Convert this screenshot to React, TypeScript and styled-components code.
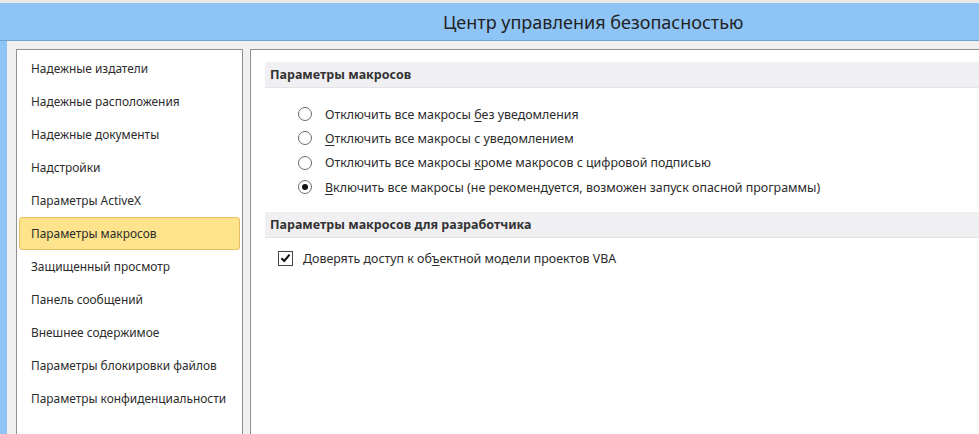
import styled, { createGlobalStyle } from "styled-components";

const GlobalStyle = createGlobalStyle`
    html, body {
        margin: 0;
        padding: 0;
        overflow: hidden;
    }
    body {
        font-family: "Noto Sans", "Open Sans", sans-serif;
        color: #2b2b2b;
    }
`;

const Window = styled.div`
    width: 979px;
    height: 434px;
    display: flex;
    flex-direction: column;
    background: #8ec5f6;
    border-top: 3px solid #e9e9e9;
    box-sizing: border-box;
    overflow: hidden;
`;

const TitleBar = styled.header`
    height: 37px;
    flex-shrink: 0;
    display: flex;
    align-items: center;
    padding-left: 443px;
    border-bottom: 1px solid #6fa3d2;
    font-size: 18px;
    color: #222;
`;

const Body = styled.div`
    flex: 1;
    margin-left: 7px;
    background: #f0f0f0;
    padding: 8px 0 0 9px;
    display: grid;
    grid-template-columns: 227px 1fr;
    column-gap: 7px;
    min-height: 0;
`;

const Panel = styled.div`
    background: #fff;
    border: 1px solid #8f8f8f;
    border-bottom: none;
    box-sizing: border-box;
`;

const Sidebar = styled(Panel)`
    padding: 2px 1px 0;
`;

const NavItem = styled.div<{ $active?: boolean }>`
    height: 33px;
    display: flex;
    align-items: center;
    padding: 0 0 1px 11px;
    box-sizing: border-box;
    font-size: 11.9px;
    border-radius: 3px;
    margin: 0 1px;
    border: 1px solid ${(p) => (p.$active ? "#e5c062" : "transparent")};
    background: ${(p) => (p.$active ? "#fde48c" : "transparent")};
`;

const Content = styled(Panel)`
    border-right: none;
    padding: 12px 0 0 14px;
`;

const SectionHeader = styled.div`
    height: 26px;
    display: flex;
    align-items: center;
    padding-left: 5px;
    background: #f0f0f3;
    border-bottom: 1px solid #e3e3e8;
    box-sizing: border-box;
    font-size: 12.5px;
    font-weight: 700;
    color: #333;
`;

const OptionList = styled.div<{ $indent: number; $top: number }>`
    padding: ${(p) => p.$top}px 0 13px ${(p) => p.$indent}px;
`;

const Option = styled.label`
    height: 24.3px;
    display: flex;
    align-items: center;
    font-size: 12.4px;
`;

const Radio = styled.span<{ $checked?: boolean }>`
    width: 14px;
    height: 14px;
    border-radius: 50%;
    border: 1px solid #6a6a6a;
    background: #fff;
    box-sizing: border-box;
    margin-right: 13px;
    display: flex;
    align-items: center;
    justify-content: center;

    &::after {
        content: "";
        width: 6px;
        height: 6px;
        border-radius: 50%;
        background: #111;
        display: ${(p) => (p.$checked ? "block" : "none")};
    }
`;

const CheckBox = styled.span`
    width: 15px;
    height: 15px;
    border: 1px solid #444;
    background: #fff;
    box-sizing: border-box;
    margin-right: 10px;
    display: flex;
    align-items: center;
    justify-content: center;
`;

const Key = styled.u`
    text-underline-offset: 2px;
`;

const navItems = [
    "Надежные издатели",
    "Надежные расположения",
    "Надежные документы",
    "Надстройки",
    "Параметры ActiveX",
    "Параметры макросов",
    "Защищенный просмотр",
    "Панель сообщений",
    "Внешнее содержимое",
    "Параметры блокировки файлов",
    "Параметры конфиденциальности",
];

export default function App() {
    return (
        <Window>
            <GlobalStyle />
            <TitleBar>Центр управления безопасностью</TitleBar>
            <Body>
                <Sidebar>
                    {navItems.map((item) => (
                        <NavItem key={item} $active={item === "Параметры макросов"}>
                            {item}
                        </NavItem>
                    ))}
                </Sidebar>
                <Content>
                    <SectionHeader>Параметры макросов</SectionHeader>
                    <OptionList $indent={33} $top={14}>
                        <Option>
                            <Radio />
                            <span>
                                Отключить все макросы <Key>б</Key>ез уведомления
                            </span>
                        </Option>
                        <Option>
                            <Radio />
                            <span>
                                <Key>О</Key>тключить все макросы с уведомлением
                            </span>
                        </Option>
                        <Option>
                            <Radio />
                            <span>
                                Отключить все макросы <Key>к</Key>роме макросов с цифровой подписью
                            </span>
                        </Option>
                        <Option>
                            <Radio $checked />
                            <span>
                                <Key>В</Key>ключить все макросы (не рекомендуется, возможен запуск опасной программы)
                            </span>
                        </Option>
                    </OptionList>
                    <SectionHeader>Параметры макросов для разработчика</SectionHeader>
                    <OptionList $indent={13} $top={8}>
                        <Option>
                            <CheckBox>
                                <svg width="11" height="10" viewBox="0 0 11 10">
                                    <path d="M1.5 5.2 L4.2 8 L9.6 1.6" fill="none" stroke="#111" strokeWidth="2" />
                                </svg>
                            </CheckBox>
                            <span>
                                Доверять доступ к об<Key>ъ</Key>ектной модели проектов VBA
                            </span>
                        </Option>
                    </OptionList>
                </Content>
            </Body>
        </Window>
    );
}
